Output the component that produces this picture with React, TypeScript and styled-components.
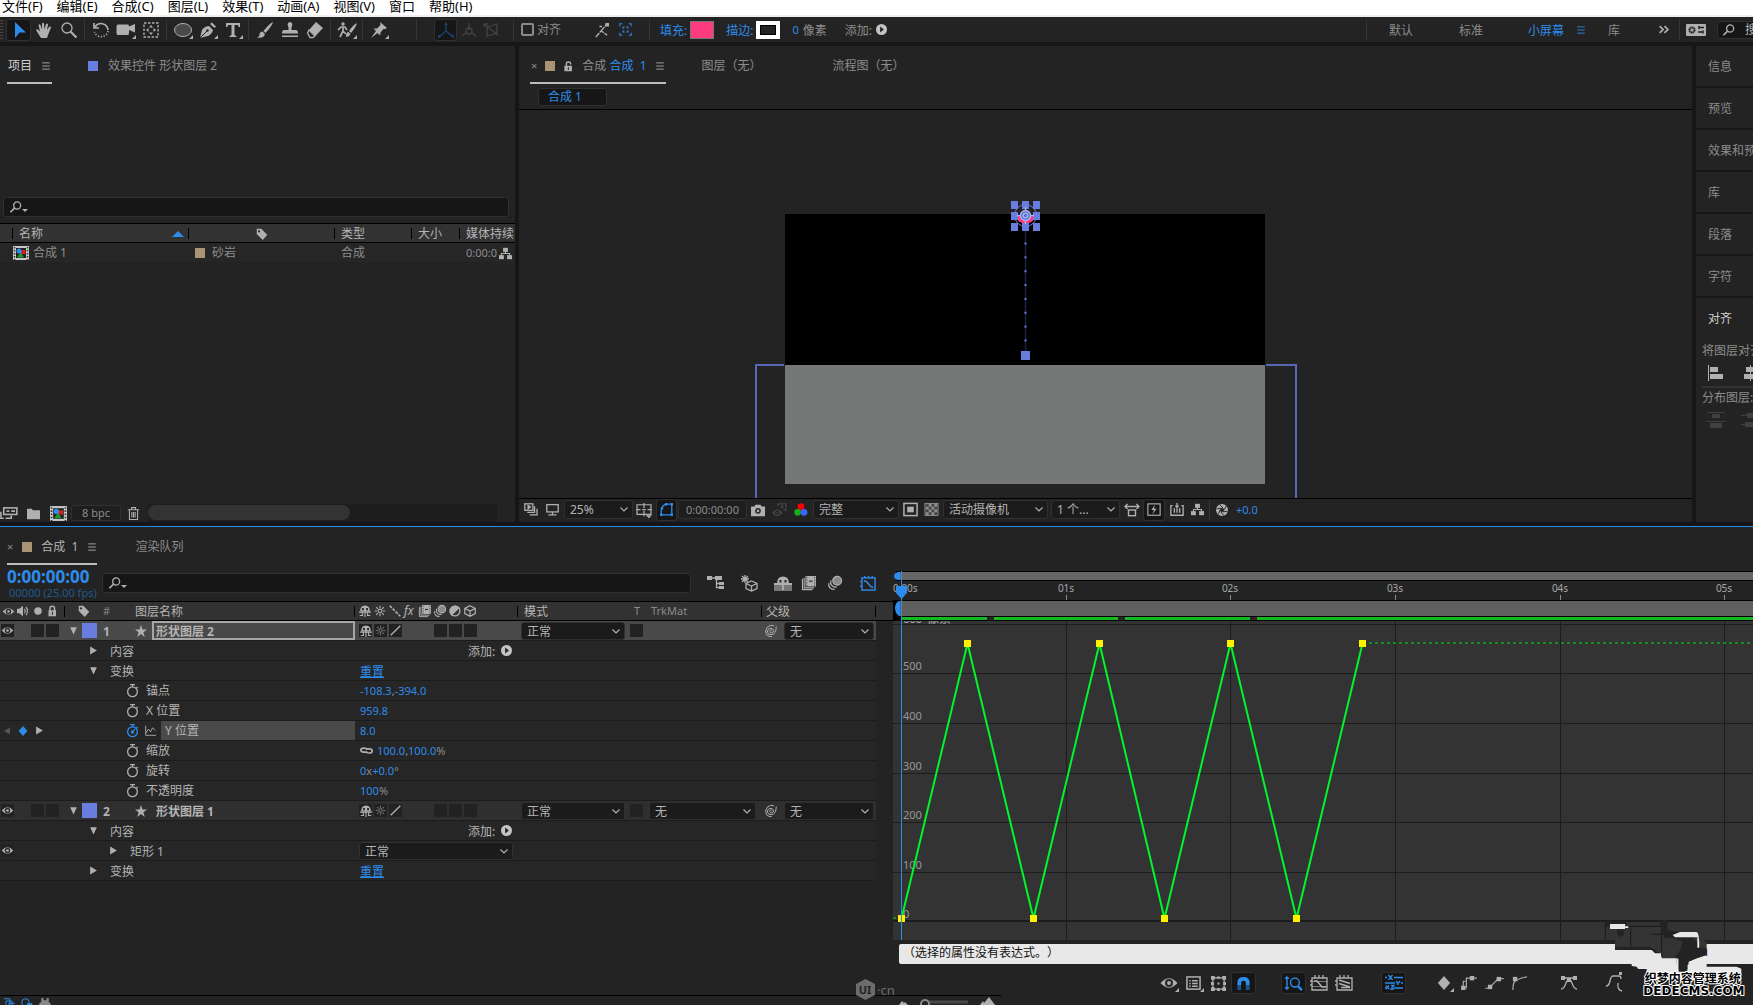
import React from "react";
import styled, { createGlobalStyle, css } from "styled-components";

const c = {
  bg: "#232323",
  gap: "#161616",
  head: "#323232",
  well: "#161616",
  line: "#303030",
  dim: "#8c8c8c",
  text: "#b4b4b4",
  bright: "#d0d0d0",
  icon: "#b0b0b0",
  blue: "#2d8ceb",
  layer: "#687ddd",
  sand: "#a89474",
};

const Global = createGlobalStyle`
  * { box-sizing: border-box; }
  body { margin: 0; background: ${c.gap}; overflow: hidden; text-spacing-trim: space-all; }
  body, button, input, select { font: 12px/16px "Noto Sans", "Noto Sans CJK SC", sans-serif; }
  svg { display: block; flex: none; }
`;

/* ---------- icons ---------- */

const S = { fill: "none", stroke: "currentColor", strokeWidth: 1.3 } as const;

const art: Record<string, React.ReactNode> = {
  arrow: <path d="M4 0L15 10.500 8.500 10.500 4 16Z" fill="currentColor" />,
  hand: <path d="M5 16L1.500 10.500 0 8Q1 6.500 2.500 8L4 9.500 2.500 3Q3.500 1.500 4.500 3L6 7.500 6 1.500Q7 0 8 1.500L8.500 7.500 10 2Q11.500 1 12 2.500L11 8 13.500 4.500Q15 4 15 5.500L12 13 11 16Z" fill="currentColor" />,
  zoom: <g {...S}><circle cx="6" cy="6" r="5" /><path d="M9.500 9.500L15.500 15.500" strokeWidth="2.200" /></g>,
  rotate: <g {...S} strokeWidth="1.700"><path d="M2 5A7 7 0 0 1 15 8" /><path d="M15 9A7 7 0 0 1 1.500 10" strokeDasharray="1.200 1.700" /><path d="M1 1V6H6" /></g>,
  camera: <path d="M0 2.500H10Q11 2.500 11 4.500L17 2V10.500L11 8V11Q11 13 10 13H0Q-1.500 13 -1.500 11V4.500Q-1.500 2.500 0 2.500Z" fill="currentColor" />,
  panBehind: <g {...S}><rect x="1" y="1" width="14" height="14" strokeDasharray="2.500 1.500" /><path d="M8 3L10 5.500H6ZM8 13L10 10.500H6ZM3 8L5.500 6V10ZM13 8L10.500 6V10Z" fill="currentColor" stroke="none" /></g>,
  ellipse: <ellipse cx="8" cy="8" rx="8.500" ry="6.500" fill="#4a4a4a" stroke="currentColor" />,
  pen: <g><path d="M0 16L2 8Q5 4 9 4L13 8Q12 12 8 14Z" fill="currentColor" /><path d="M10 2L12 .500 16 4.500 14.500 6Z" fill="currentColor" /><path d="M0 16L7 9" stroke={c.bg} /><circle cx="7.500" cy="8.500" r="1.200" fill={c.bg} /></g>,
  type: <path d="M1 1H15V5H13.500L13 3H9.500V13L11.500 14V15H4.500V14L6.500 13V3H3L2.500 5H1Z" fill="currentColor" />,
  brush: <path d="M16 0Q12 2 6.500 9L8.500 11Q15 4 16 0ZM5.500 9.500Q2.500 9.500 2.500 13 2 15 0 15.500 6.500 17 8 12Z" fill="currentColor" />,
  stamp: <path d="M8 0A2.600 2.600 0 0 1 10 4Q9 6 9.500 8H14Q16 8 16 11.500H0Q0 8 2 8H6.500Q7 6 6 4A2.600 2.600 0 0 1 8 0ZM0 13.500H16V15H0Z" fill="currentColor" />,
  eraser: <g><path d="M9 0L16 6 8.500 14 2 8Z" fill="currentColor" /><path d="M2 8L8 14 6 15.500H3L.500 11Z" {...S} /></g>,
  roto: <g><circle cx="4" cy="2" r="1.700" fill="currentColor" /><path d="M-1 8L2 5H6L8 8M4 5V9L1 15M4 9L7 12" {...S} strokeWidth="1.700" /><path d="M18 1Q14 3 10 9L12 11Q17 5 18 1ZM9.500 10Q7 10 7 15 10 15 11.500 12Z" fill="currentColor" /></g>,
  pin: <path d="M9 0L16 6 14 7 12.500 7 9.500 10.500 9 13.500 6.500 11 0 16 5 9 2.500 6.500 6 6.500 9.500 3Z" fill="currentColor" />,
  axis: <g {...S}><path d="M8 2V9M8 9L1 15M8 9L15 15" /><path d="M8 0L10 3H6ZM0 16V12L3 15ZM16 16V12L13 15Z" fill="currentColor" stroke="none" /></g>,
  axisWorld: <g {...S}><circle cx="8" cy="9" r="3" /><path d="M8 1V8M6 10L1 14M10 10L15 14" /></g>,
  axisView: <g {...S}><path d="M3 5L13 2V11L3 14ZM0 2L14 13M0 2V5M0 2H4" /></g>,
  snapArrow: <g {...S} strokeWidth="1.600"><path d="M1 16L7 9 14 14M7 9L13 2M5 4H8" strokeDasharray="6 1" /><rect x="12" y="0" width="4" height="4" fill="currentColor" stroke="none" /></g>,
  corners: <g {...S}><path d="M1 4V1H4M12 1H15V4M15 12V15H12M4 15H1V12" /><path d="M5 7V5H7M9 5H11V7M5 9V11H7M9 11H11V9" /></g>,
  play: <g><circle cx="8" cy="8" r="8" fill="#c4c4c4" /><path d="M6 3.500L11.500 8 6 12.500Z" fill={c.bg} /></g>,
  bars: <path d="M2 3H14M2 8H14M2 13H14" {...S} strokeWidth="1.400" />,
  chevrons: <path d="M1 3L6 8 1 13M8 3L13 8 8 13" {...S} strokeWidth="2.500" />,
  card: <g><rect x="-2" y="2" width="20" height="12" rx="1" fill="currentColor" /><path d="M11 5.500H16M10 10H15M11 4V7M15 8.500V11.500" stroke={c.bg} strokeWidth="1.500" /><circle cx="4" cy="8" r="2.500" fill="none" stroke={c.bg} strokeWidth="2.200" strokeDasharray="1.500 .400" /></g>,
  search: <g {...S} strokeWidth="1.700"><circle cx="9.500" cy="6" r="4.700" /><path d="M6 9.500L.500 15" strokeWidth="2.200" /></g>,
  tag: <path d="M1 1H7L15 9 9 16 1 8ZM4 3A1.500 1.500 0 1 0 4 6 1.500 1.500 0 1 0 4 3Z" fill="currentColor" fillRule="evenodd" />,
  comp: <g><rect x="0" y="1" width="16" height="14" fill="#c8c8c8" /><path d="M1.500 2V15M14.500 2V15" stroke="#333" strokeDasharray="1.500 1.500" strokeWidth="1.500" /><rect x="3" y="3" width="10" height="10" fill="#222" /><rect x="8" y="5" width="4.500" height="4" fill="#d21f1f" /><path d="M7.500 7L11 12.500H4Z" fill="#1d9c2a" /><circle cx="6" cy="6" r="2.500" fill="#2d8ceb" /></g>,
  tree: <g fill="currentColor"><rect x="5" y="1" width="6" height="5" /><rect x="0" y="10" width="6" height="5" /><rect x="10" y="10" width="6" height="5" /><path d="M3 10V8H13V10M8 5V8" {...S} /></g>,
  interpret: <g {...S} strokeWidth="1.700"><rect x="4" y="2" width="14" height="7" /><path d="M7 5.500H10M12 5.500H16M1 6V12M-2 7V13M-2 13H4M6 13H12V10" /></g>,
  folder: <path d="M0 2H6L7 4H16V15H0Z" fill="currentColor" />,
  trash: <g {...S}><path d="M1 3.500H15M5.500 3V.800H10.500V3M3 4V15.300H13V4M6 6V13M8 6V13M10 6V13" /></g>,
  lock: <path d="M2 7H3V4Q3 .500 7 .500 11 .500 11 4V7H12V15H2ZM5 7H9V4Q9 2.500 7 2.500 5 2.500 5 4ZM6.500 9V13H8V9Z" fill="currentColor" fillRule="evenodd" />,
  unlock: <path d="M3 7H6V4Q6 2.500 8 2.500 10 2.500 10 4V5H12V4Q12 .500 8 .500 4 .500 4 4V7H2V15H13V7ZM7 9H8.500V13H7Z" fill="currentColor" fillRule="evenodd" />,
  viewers: <g {...S} strokeWidth="1.600"><rect x="1" y="1" width="10" height="8" /><path d="M5 3L8 5 5 7Z" fill="currentColor" /><path d="M13 4V11.500H4M16 7V14.500H7" /></g>,
  monitor: <g {...S} strokeWidth="1.600"><rect x="1" y="2" width="14" height="9" /><path d="M8 11V14.500M3 14.500H13" /></g>,
  guides: <g><path d="M0 2H16V13H0ZM8 0V6M8 9V15M-1 7.500H4M12 7.500H17M6 7.500H10" {...S} strokeWidth="1.400" /><path d="M10 14H17L13.500 17.500Z" fill="currentColor" /></g>,
  mask: <g {...S} strokeWidth="1.600"><path d="M1.500 14.500V9Q3 2 8 1.500H14.500V14.500Z" /><path d="M0 13H3V16H0ZM13 13H16V16H13ZM13 0H16V3H13ZM6 0H9V3H6ZM1 5H4V8H1Z" fill="currentColor" stroke="none" /></g>,
  photo: <g><path d="M0 4H4L5 2H11L12 4H16V15H0Z" fill="currentColor" /><circle cx="8" cy="9" r="3.200" fill={c.bg} /><circle cx="8" cy="9" r="1.500" fill="currentColor" /></g>,
  showPhoto: <g><path d="M0 11Q6 3 12 11 6 19 0 11Z" fill="currentColor" /><circle cx="6" cy="11" r="2.500" fill={c.bg} /><circle cx="6" cy="11" r="1" fill="currentColor" /><path d="M7 3V1H16V8H13" {...S} strokeWidth="1.500" /><circle cx="11.500" cy="4.500" r="1.700" fill="currentColor" /></g>,
  rgb: <g><circle cx="8" cy="3.500" r="4.500" fill="#f00" /><circle cx="3.500" cy="11" r="4.500" fill="#16b016" /><circle cx="12" cy="11" r="4.500" fill="#3a66ff" /></g>,
  region: <g><rect x="1" y="1.500" width="14" height="13" {...S} strokeWidth="1.600" /><rect x="4.500" y="5" width="7" height="6" fill="currentColor" /></g>,
  checker: <g><rect x="1" y="1.500" width="14" height="13" fill="#444" stroke="currentColor" strokeWidth=".700" /><path d="M5 2H8V5H5ZM11 2H14V5H11ZM2 5H5V8H2ZM8 5H11V8H8ZM5 8H8V11H5ZM11 8H14V11H11ZM2 11H5V14H2ZM8 11H11V14H8Z" fill="#8f8f8f" /></g>,
  pixelAspect: <g {...S} strokeWidth="1.600"><path d="M0 4H16M3 1L0 4 3 7M13 1L16 4 13 7" /><rect x="4" y="8" width="8" height="6.500" /></g>,
  fast: <g {...S}><rect x="1" y="1" width="14" height="13" /><path d="M9 2L5 8H8L6 13 11 6.500H8Z" fill="currentColor" stroke="none" /></g>,
  timelineBtn: <g {...S} strokeWidth="1.500"><path d="M3 3H1V14H15V3H13M5 6V11M8 6V11M11 6V11M8 0V5M6 3L8 5 10 3" /></g>,
  aperture: <g><circle cx="8" cy="8" r="8" fill="currentColor" /><circle cx="8" cy="8" r="2.800" fill={c.bg} /><path d="M5 1L9.500 5.500M14 2.500L10.500 8M15.500 9.500L9 10.500M10.500 15.500L6.500 10.500M3 14L5.500 8M.500 6.500L7 5.500" stroke={c.bg} strokeWidth="1.200" /></g>,
  eye: <g><path d="M-.500 8Q8 -1.500 16.500 8 8 17.500 -.500 8Z" fill="currentColor" /><circle cx="8" cy="8" r="4" fill="#2a2a2a" /><circle cx="8" cy="8" r="1.900" fill="currentColor" /></g>,
  speaker: <g><path d="M0 5H3L8 1V15L3 11H0Z" fill="currentColor" /><path d="M10 5Q12 8 10 11M12 2.500Q16 8 12 13.500" {...S} strokeWidth="1.600" /></g>,
  dot: <circle cx="8" cy="8" r="5" fill="currentColor" />,
  star: <path d="M8 0L10 6H16L11.200 9.700 13 16 8 12 3 16 4.800 9.700 0 6H6Z" fill="currentColor" />,
  shy: <g><path d="M1.500 8.500Q1.500 .500 8 .500 14.500 .500 14.500 8.500Z" fill="currentColor" /><path d="M4 4H6.500V7H4ZM9.500 4H12V7H9.500Z" fill="#2a2a2a" /><path d="M0 9.500H16M8 8V16M1 14H5.500M10.500 14H15M4.500 9V14M11.500 9V14" {...S} strokeWidth="1.500" /></g>,
  shyFill: <g><path d="M-1 9H17V16H-1Z" fill="#777" /><path d="M2 8.500Q2 1.500 8 1.500 14 1.500 14 8.500Z" fill="currentColor" /><path d="M4.500 5H6.500V7.500H4.500ZM9.500 5H11.500V7.500H9.500Z" fill="#2a2a2a" /><path d="M-1 9H17M8 8V15" {...S} strokeWidth="1.800" /></g>,
  sun: <g {...S} strokeWidth="1.500"><circle cx="8" cy="8" r="2.500" /><path d="M8 1V4M8 12V15M1 8H4M12 8H15M3 3L5 5M11 11L13 13M13 3L11 5M3 13L5 11" /></g>,
  slash: <path d="M1 15L15 1" {...S} strokeWidth="2" />,
  dashSlash: <path d="M1 1L15 15" {...S} strokeWidth="2.200" strokeDasharray="4 1.500" />,
  film: <g><rect x="4" y="0" width="12" height="12" fill="currentColor" /><path d="M5.500 1V12M14.500 1V12" stroke={c.head} strokeDasharray="1.500 1.500" /><path d="M8 6H12" stroke={c.head} strokeWidth="1.500" /><path d="M.500 3V15.500H12M2.500 2V13.500H14" {...S} /></g>,
  blur: <g {...S} strokeWidth="1.400"><circle cx="10.500" cy="5.500" r="5" fill="#8a8a8a" /><path d="M3.500 5A5.500 5.500 0 0 0 10 12.500M1 8A5.500 5.500 0 0 0 7.500 15" /></g>,
  half: <g {...S} strokeWidth="1.800"><circle cx="8" cy="8" r="6.500" /><path d="M13 3.500A6.500 6.500 0 1 0 3.500 13Z" fill="currentColor" /></g>,
  cube: <path d="M8 1L15 4.500V11.500L8 15 1 11.500V4.500ZM1 4.500L8 8 15 4.500M8 8V15" {...S} strokeWidth="1.600" />,
  stopwatch: <g {...S} strokeWidth="1.600"><circle cx="8" cy="9.500" r="6" /><path d="M8 3.500V1M5 .800H11M13 3.500L14.500 5" /></g>,
  stopwatchOn: <g {...S} strokeWidth="1.600"><circle cx="8" cy="9.500" r="6" /><path d="M8 3.500V1M5 .800H11M13 3.500L14.500 5M7 10.500L11 6.500M7 8V11H10" /></g>,
  graphSmall: <path d="M1 1V15H16M1 12L5 6 8 10 11 4 15 8" {...S} />,
  link: <g {...S} strokeWidth="2"><path d="M9 10H5Q1 10 1 7.500T5 5Q8 5 9 7M7 6H11Q15 6 15 8.500T11 11Q8 11 7 9" /></g>,
  whip: <path d="M9.500 7A2 2 0 1 0 9 10.500Q11.500 10 11.500 7A4.300 4.300 0 1 0 8 13Q15 12.500 15 2M12 1Q7 -1 3 3 -1 8 2 13 5 16 9 15.500" {...S} />,
  flow: <g fill="currentColor"><rect x="-1" y="1" width="5" height="4" /><rect x="7" y="1" width="7" height="4" /><rect x="11" y="7" width="5" height="3" /><rect x="11" y="11" width="5" height="3" /><path d="M4 3H8M8.500 3V12.500H11M8.500 8.500H11" {...S} /></g>,
  draft: <g><path d="M4 0V8M0 4H8M1 1L7 7M7 1L1 7" {...S} /><path d="M10.500 6L16 8.500V13.500L10.500 16 5 13.500V8.500ZM5 8.500L10.500 11 16 8.500M10.500 11V16" {...S} /></g>,
  graph: <g {...S} strokeWidth="1.500"><rect x="1" y="2" width="14" height="13" /><path d="M4 2V0M8 2V0M12 2V0M1 6H-1M1 11H-1M3 5Q6 5 8 8.500T13 12" /></g>,
  fitSel: <g {...S}><path d="M1 15V3H16V15ZM4 0V3M8 0V3M12 0V3M-1 6H1M-1 10H1" /><path d="M1 6.500H16M1 11.500H16" strokeWidth=".600" /><path d="M3 6H6L11 12H15" strokeWidth="1.600" /></g>,
  fitAll: <g {...S}><path d="M1 15V3H16V15ZM4 0V3M8 0V3M12 0V3M-1 6H1M-1 10H1" /><path d="M3 5L14 8.500M3 8.500L14 12M5 12.500H14" strokeWidth="1.500" /></g>,
  list: <g {...S} strokeWidth="1.600"><rect x="1" y="1" width="14" height="13" /><path d="M3.500 5H5M6.500 5H12.500M3.500 8H5M6.500 8H12.500M3.500 11H5M6.500 11H12.500" /></g>,
  transform: <g {...S}><path d="M2 2H14V14H2Z" /><path d="M0 0H4V4H0ZM12 0H16V4H12ZM0 12H4V16H0ZM12 12H16V16H12ZM6.500 .500H9.500V3H6.500ZM6.500 13H9.500V16H6.500ZM0 6.500H3V9.500H0ZM13 6.500H16V9.500H13ZM7 7H9V9H7Z" fill="currentColor" stroke="none" /></g>,
  magnet: <g fill="none" strokeWidth="4"><path d="M3.500 10V7Q3.500 3 8 3 12.500 3 12.500 7V10" stroke="currentColor" /><path d="M3.500 10V15M12.500 10V15" stroke="#1c548c" /></g>,
  autoZoom: <g {...S} strokeWidth="1.500"><circle cx="9.500" cy="7" r="4.700" /><path d="M13 11L17 15" strokeWidth="2.500" /><path d="M1 1V14M-1 3L1 1 3 3M-1 12L1 14 3 12" /></g>,
  separate: <g {...S}><path d="M-1 2.500H1M8 2.500H17M2.500 0L6.500 5M6.500 0L2.500 5M-1 8H9M10 6L12 8.500 14 6M12 8.500V10M15 8H17M-1 13H0M8 13H17M0 10.500L3 14M3 10.500L0 14M5 10.500H8L5 14H8" /></g>,
  diamond: <path d="M8 0L15 8 8 16 1 8Z" fill="currentColor" />,
  hold: <g fill="currentColor"><rect x="-1" y="11" width="5" height="5" /><rect x="9" y="0" width="5" height="5" /><path d="M1.500 11V6H4M9 2.500H5V13.500H4M14 2.500H17" {...S} /></g>,
  linear: <g fill="currentColor"><rect x="1" y="10" width="5" height="5" /><rect x="11" y="1" width="5" height="5" /><path d="M-2 14H2M5 11L12 4M13 3H19" {...S} /></g>,
  auto: <g fill="currentColor"><rect x="1" y="1" width="5" height="5" /><path d="M1 16Q1 6 5 5 10 2 17 1" {...S} /></g>,
  ease: <g fill="currentColor"><path d="M0 14Q3 14 5 8 6 5 8 5 10 5 11 8 13 14 16 14M1 3H15" {...S} /><rect x="0" y="1" width="4" height="4" /><rect x="6" y="3" width="4" height="4" /><rect x="12" y="1" width="4" height="4" /></g>,
  easeIn: <g><path d="M-1 11Q2 11 3 6 4 1 6 1H12Q14 1 14 4M11 8Q10 15 15 16" {...S} /><rect x="12" y="-3" width="3" height="3" fill="currentColor" /></g>,
  tri: <path d="M2 1L14 8 2 15Z" fill="currentColor" />,
  triDown: <path d="M2 2H14L8 15Z" fill="currentColor" />,
  triLeft: <path d="M14 1L2 8 14 15Z" fill="currentColor" />,
  alignLeft: <g fill="currentColor"><rect x="0" y="0" width="1" height="16" /><rect x="2" y="2" width="8" height="5" /><rect x="2" y="9" width="13" height="5" /></g>,
  alignMid: <g fill="currentColor"><rect x="7" y="0" width="1" height="16" /><rect x="3" y="2" width="10" height="5" /><rect x="1" y="9" width="14" height="5" /></g>,
  distTop: <g fill="currentColor"><rect x="-1" y="0" width="18" height="1" /><rect x="4" y="2" width="8" height="4" /><rect x="-1" y="9" width="18" height="1" /><rect x="2" y="11" width="12" height="5" /></g>,
  distMid: <g fill="currentColor"><rect x="-2" y="3" width="18" height="1" /><rect x="4" y="1" width="10" height="5" /><rect x="-2" y="12" width="18" height="1" /><rect x="2" y="10" width="12" height="5" /></g>,
  copies: <g {...S}><path d="M1 1H9V12M4 12V4H12V16M8 16V7H16" /></g>,
  shapes: <g><circle cx="6" cy="6" r="5" {...S} /><rect x="8" y="7" width="7" height="9" fill="currentColor" /></g>,
  brace: <path d="M3 0H6V3H10V0H13V5L16 8V12H0V8L3 5Z" fill="#888" />,
};

const Icon = ({ n, s = 16, color }: { n: string; s?: number; color?: string }) => (
  <svg width={s} height={s} viewBox="0 0 16 16" color={color ?? c.icon} overflow="visible" aria-hidden="true">
    {art[n]}
  </svg>
);

/* ---------- shell ---------- */

const Shell = styled.div`
  position: relative;
  display: flex;
  flex-direction: column;
  height: 100vh;
  overflow: hidden;
  background: ${c.gap};
  color: ${c.text};
  white-space: nowrap;
  cursor: default;
`;

const MenuBar = styled.nav`
  display: flex;
  gap: 14px;
  flex: none;
  height: 17px;
  padding-left: 2px;
  background: #fff;
  border-bottom: 2px solid #f0f0f0;
`;

const MenuItem = styled.button`
  border: 0;
  padding: 0;
  height: 13px;
  background: none;
  color: #000;
  font-size: 13px;
  line-height: 13px;
`;

const Toolbar = styled.div`
  display: flex;
  align-items: center;
  flex: none;
  height: 25px;
  margin-bottom: 4px;
  background: ${c.bg};
  overflow: hidden;
`;

const Grip = styled.div`
  width: 3px;
  height: 20px;
  margin-right: 3px;
  background: repeating-linear-gradient(#444 0 1px, transparent 1px 3px);
`;

const Tool = styled.button<{ $on?: boolean; $w?: number; $more?: boolean }>`
  position: relative;
  display: flex;
  flex: none;
  align-items: center;
  justify-content: center;
  width: ${(p) => p.$w ?? 25}px;
  height: 22px;
  padding: 0;
  border: 1px solid ${(p) => (p.$on ? "#303030" : "transparent")};
  border-radius: 3px;
  background: ${(p) => (p.$on ? c.well : "none")};
  ${(p) =>
    p.$more &&
    css`
      &::after {
        content: "";
        position: absolute;
        right: 1px;
        bottom: 1px;
        border: 2px solid ${c.icon};
        border-left-color: transparent;
        border-top-color: transparent;
      }
    `}
`;

const Sep = styled.span`
  flex: none;
  width: 1px;
  height: 20px;
  margin: 0 3px;
  background: #373737;
`;

const Space = styled.span<{ $w: number }>`
  flex: none;
  width: ${(p) => p.$w}px;
`;

const Grow = styled.span`
  flex: 1;
`;

const Check = styled.label`
  display: flex;
  align-items: center;
  gap: 3px;
  width: 72px;
  color: ${c.dim};
  input {
    appearance: none;
    width: 13px;
    height: 13px;
    margin: 0;
    border: 2px solid #8a8a8a;
    border-radius: 2px;
  }
`;

const Txt = styled.span<{ $c?: string; $s?: number; $b?: boolean }>`
  flex: none;
  padding-top: ${(p) => (p.$s ? 0 : 2)}px;
  color: ${(p) => p.$c ?? c.text};
  font-size: ${(p) => p.$s ?? 12}px;
  font-weight: ${(p) => (p.$b ? 700 : 400)};
`;

const Swatch = styled.button<{ $stroke?: boolean }>`
  width: 24px;
  height: 18px;
  margin: 0 12px 0 3px;
  padding: 0;
  border: ${(p) => (p.$stroke ? "4px solid #fff" : "1px solid #777")};
  background: ${(p) => (p.$stroke ? "#222" : "#ff3b7f")};
  ${(p) => p.$stroke && "box-shadow: inset 0 0 0 1px #000;"}
`;

const Workspace = styled.button<{ $on?: boolean; $w: number }>`
  flex: none;
  width: ${(p) => p.$w}px;
  padding: 2px 0 0;
  border: 0;
  background: none;
  color: ${(p) => (p.$on ? c.blue : c.dim)};
  text-align: left;
`;

const HelpSearch = styled.label`
  display: flex;
  flex: none;
  align-items: center;
  gap: 10px;
  width: 90px;
  height: 18px;
  margin: 0 -54px 0 13px;
  padding-left: 5px;
  border: 1px solid #303030;
  border-radius: 3px;
  background: ${c.well};
  input {
    width: 54px;
    padding: 0;
    border: 0;
    background: none;
    &::placeholder { color: ${c.text}; }
  }
`;

const Upper = styled.div`
  display: flex;
  flex: none;
  gap: 4px;
  height: 476px;
`;

const ProjectPanel = styled.section`
  display: flex;
  flex: none;
  flex-direction: column;
  width: 515px;
  background: ${c.bg};
`;

const TabBar = styled.div<{ $h: number; $pad: number }>`
  display: flex;
  flex: none;
  height: ${(p) => p.$h}px;
  padding-left: ${(p) => p.$pad}px;
`;

const Tab = styled.button<{ $on?: boolean; $c?: string; $gap?: number; $ml?: number; $px?: number }>`
  display: flex;
  align-items: center;
  gap: ${(p) => p.$gap ?? 10}px;
  height: 38px;
  margin: 0 0 0 ${(p) => p.$ml ?? 0}px;
  padding: 4px ${(p) => p.$px ?? 2}px 0;
  border: 0;
  border-bottom: 2px solid ${(p) => (p.$on ? "#bdbdbd" : "transparent")};
  background: none;
  color: ${(p) => p.$c ?? c.dim};
`;

const Chip = styled.i<{ $c: string; $s?: number }>`
  flex: none;
  width: ${(p) => p.$s ?? 10}px;
  height: ${(p) => p.$s ?? 10}px;
  background: ${(p) => p.$c};
`;

const SearchBox = styled.label`
  display: flex;
  align-items: center;
  flex: 1;
  height: 20px;
  padding-left: 6px;
  border: 1px solid #2f2f2f;
  border-radius: 3px;
  background: ${c.well};
  input {
    flex: 1;
    min-width: 0;
    border: 0;
    background: none;
    color: ${c.text};
    outline: 0;
  }
`;

const SmallTri = styled.i`
  border: 3px solid transparent;
  border-top-color: ${c.icon};
  border-bottom: 0;
  margin-top: 7px;
`;

const ProjectSearch = styled.div`
  display: flex;
  padding: 111px 6px 6px 3px;
`;

const ProjectTable = styled.table`
  width: 100%;
  table-layout: fixed;
  border-collapse: collapse;
  th, td {
    height: 19px;
    padding: 2px 0 0 7px;
    font-weight: 400;
    text-align: left;
    line-height: 16px;
    overflow: hidden;
  }
  th {
    background: linear-gradient(#000, #000) 0 4px / 1px 11px no-repeat ${c.head};
    border: solid #000;
    border-width: 1px 0;
    color: ${c.text};
  }
  th:first-child { background: linear-gradient(#000, #000) 12px 4px / 1px 11px no-repeat ${c.head}; padding-left: 19px; }
  td:first-child { padding-left: 13px; }
  td { background: #262626; color: ${c.dim}; }
`;

const Inline = styled.span<{ $gap?: number; $between?: boolean; $center?: boolean }>`
  display: flex;
  align-items: center;
  height: 16px;
  gap: ${(p) => p.$gap ?? 4}px;
  ${(p) => p.$between && "justify-content: space-between; padding-right: 4px;"}
  ${(p) => p.$center && "justify-content: center; padding-right: 6px;"}
`;

const Footer = styled.div<{ $line?: boolean }>`
  display: flex;
  flex: none;
  align-items: center;
  height: ${(p) => (p.$line ? 24 : 18)}px;
  margin-top: auto;
  ${(p) => p.$line && "border-top: 1px solid #000; padding: 0 0 2px 5px;"}
  overflow: hidden;
`;

const Depth = styled.button`
  width: 50px;
  height: 16px;
  margin: 0 6px 0 4px;
  padding: 0;
  border: 1px solid #303030;
  border-radius: 3px;
  background: #1e1e1e;
  color: ${c.dim};
  font-size: 11px;
  line-height: 14px;
`;

const ScrollTrack = styled.div`
  flex: 1;
  height: 18px;
  margin: 0 18px 0 8px;
  background: #1d1d1d;
  &::before {
    content: "";
    display: block;
    width: 58%;
    height: 15px;
    margin-top: 1px;
    border-radius: 8px;
    background: #333;
  }
`;

/* ---------- viewer ---------- */

const Viewer = styled.section`
  display: flex;
  flex: 1;
  min-width: 0;
  flex-direction: column;
  background: ${c.bg};
`;

const CompPath = styled.div`
  flex: none;
  height: 22px;
  padding-left: 19px;
  border-bottom: 1px solid #000;
  button {
    width: 69px;
    height: 18px;
    padding: 0 0 0 9px;
    border: 1px solid #303030;
    border-radius: 3px;
    background: ${c.well};
    color: ${c.blue};
    text-align: left;
    line-height: 16px;
  }
`;

const Canvas = styled.svg`
  flex: 1;
  width: 100%;
  min-height: 0;
`;

const Pick = styled.span<{ $w: number; $h?: number; $ml?: number }>`
  position: relative;
  flex: none;
  width: ${(p) => p.$w}px;
  height: ${(p) => p.$h ?? 19}px;
  margin-left: ${(p) => p.$ml ?? 0}px;
  select {
    appearance: none;
    display: block;
    width: 100%;
    height: 100%;
    padding: 1px 16px 0 5px;
    border: 1px solid #303030;
    border-radius: 3px;
    background: #1b1b1b;
    color: ${c.text};
    line-height: 16px;
  }
  svg {
    position: absolute;
    right: 5px;
    top: 7px;
    pointer-events: none;
  }
`;

const Select = ({ v, w, h, ml, label }: { v: string; w: number; h?: number; ml?: number; label: string }) => (
  <Pick $w={w} $h={h} $ml={ml}>
    <select aria-label={label} defaultValue={v}>
      <option>{v}</option>
    </select>
    <svg width="8" height="5" viewBox="0 0 8 5" aria-hidden="true">
      <path d="M.500 .500L4 4 7.500 .500" fill="none" stroke={c.icon} strokeWidth="1.200" />
    </svg>
  </Pick>
);

const TimeBox = styled.button`
  width: 69px;
  height: 19px;
  margin: 0 4px 0 1px;
  padding: 0;
  border: 1px solid #303030;
  border-radius: 3px;
  background: #1e1e1e;
  color: ${c.dim};
  font-size: 11px;
`;

/* ---------- side dock ---------- */

const Dock = styled.aside`
  display: flex;
  flex: none;
  flex-direction: column;
  width: 57px;
  overflow: hidden;
`;

const DockTab = styled.button<{ $on?: boolean }>`
  flex: none;
  height: 40px;
  margin-bottom: 2px;
  padding: 2px 0 0 12px;
  border: 0;
  background: ${c.bg};
  color: ${(p) => (p.$on ? c.bright : c.dim)};
  text-align: left;
  ${(p) => p.$on && "margin-bottom: 0;"}
`;

const AlignBody = styled.div`
  flex: 1;
  padding: 5px 0 0 6px;
  background: ${c.bg};
  color: ${c.dim};
`;

const AlignRow = styled.div<{ $rule?: boolean }>`
  display: flex;
  gap: 19px;
  padding: 6px 0 5px 6px;
  ${(p) => p.$rule && "margin-bottom: 2px; border-bottom: 2px solid #333;"}
`;

/* ---------- timeline ---------- */

const Timeline = styled.section`
  display: flex;
  flex: 1;
  min-height: 0;
  flex-direction: column;
  margin-top: 4px;
  border-top: 1px solid ${c.blue};
  background: ${c.bg};
`;

const Split = styled.div`
  display: flex;
  flex: 1;
  min-height: 0;
`;

const Layers = styled.div`
  display: flex;
  flex: none;
  flex-direction: column;
  width: 893px;
`;

const TimeHead = styled.div`
  display: flex;
  flex: none;
  height: 34px;
  padding-left: 7px;
`;

const TimeCode = styled.div`
  width: 95px;
  color: ${c.blue};
  font-size: 17px;
  font-weight: 700;
  line-height: 19px;
  small {
    display: block;
    padding-left: 2px;
    color: #21588f;
    font-size: 11px;
    font-weight: 400;
    line-height: 13px;
  }
`;

const HeadSearch = styled.div`
  display: flex;
  width: 589px;
  padding-top: 6px;
`;

const HeadTools = styled.div`
  display: flex;
  align-items: center;
  flex: 1;
  padding: 0 0 2px 17px;
`;

const columns = "65px 290px 163px 109px 20px 115px 114px";

const ColumnHead = styled.div`
  display: grid;
  grid-template-columns: ${columns};
  flex: none;
  height: 20px;
  background: ${c.head};
  border: solid #000;
  border-width: 1px 0;
`;

const Cell = styled.div<{ $pl?: number; $sep?: boolean; $gap?: number }>`
  display: flex;
  align-items: center;
  min-width: 0;
  gap: ${(p) => p.$gap ?? 0}px;
  padding-left: ${(p) => p.$pl ?? 0}px;
  ${(p) => p.$sep && "background: linear-gradient(#000, #000) 100% 4px / 1px 11px no-repeat;"}
`;

const Row = styled.div<{ $kind?: "selected" | "layer" }>`
  display: grid;
  grid-template-columns: ${columns};
  flex: none;
  width: 876px;
  height: 20px;
  border-bottom: 1px solid #1c1c1c;
  background: ${(p) => (p.$kind === "selected" ? "#494949" : p.$kind === "layer" ? "#2f2f2f" : "#262626")};
`;

const Slot = styled.span`
  display: flex;
  flex: none;
  align-items: center;
  justify-content: center;
  width: 13px;
  height: 13px;
  background: #222;
`;

const Fx = styled.em`
  width: 12px;
  color: ${c.text};
  line-height: 16px;
`;

const NameBox = styled.span<{ $edit?: boolean }>`
  flex: 1;
  height: 19px;
  margin-left: 5px;
  padding-left: 2px;
  border: 2px solid ${(p) => (p.$edit ? "#a6a6a6" : "transparent")};
  color: ${c.text};
  font-weight: 700;
  line-height: 18px;
`;

const PropName = styled.span<{ $on?: boolean }>`
  flex: ${(p) => (p.$on ? "1" : "none")};
  height: 19px;
  margin-left: ${(p) => (p.$on ? 5 : 7)}px;
  padding-left: ${(p) => (p.$on ? 4 : 0)}px;
  background: ${(p) => (p.$on ? "#4a4a4a" : "none")};
  color: ${c.text};
  line-height: 20px;
`;

const Value = styled.span`
  color: ${c.blue};
  font-size: 11px;
  i { color: ${c.dim}; font-style: normal; }
`;

const Reset = styled.a`
  padding-top: 2px;
  color: ${c.blue};
`;

const BottomIcons = styled.div`
  display: flex;
  flex: none;
  gap: 6px;
  height: 10px;
  margin-top: auto;
  padding: 2px 0 0 3px;
  border-top: 1px solid #000;
  overflow: hidden;
`;

const GraphSide = styled.div`
  display: flex;
  flex: 1;
  min-width: 0;
  flex-direction: column;
  padding-top: 4px;
`;

const Chart = styled.svg`
  width: 100%;
  height: 369px;
`;

const Expression = styled.input`
  flex: none;
  height: 20px;
  margin: 4px 0 0 6px;
  padding: 0 0 4px 4px;
  border: 0;
  border-radius: 2px 0 0 2px;
  background: #e8e8e8;
  color: #111;
`;

const GraphTools = styled.div`
  display: flex;
  align-items: center;
  flex: none;
  height: 31px;
  padding: 7px 0 0 263px;
  overflow: hidden;
`;

const ZoomRow = styled.div`
  flex: none;
  width: 108px;
  height: 10px;
  border-top: 1px solid #000;
`;

const Watermark = styled.svg`
  position: absolute;
  right: 0;
  bottom: 0;
  pointer-events: none;
`;

const SiteMark = styled.div`
  position: absolute;
  left: 856px;
  bottom: 5px;
  display: flex;
  align-items: center;
  gap: 2px;
  color: #6c6c6c;
  font-size: 13px;
  pointer-events: none;
`;

/* ---------- parts ---------- */

const menus = ["文件(F)", "编辑(E)", "合成(C)", "图层(L)", "效果(T)", "动画(A)", "视图(V)", "窗口", "帮助(H)"];

const toolGroups: [string, boolean?][][] = [
  [["arrow"], ["hand"], ["zoom"]],
  [["rotate"], ["camera", true], ["panBehind"]],
  [["ellipse", true], ["pen", true], ["type", true]],
  [["brush"], ["stamp"], ["eraser"]],
  [["roto", true]],
  [["pin", true]],
];

const TopTools = () => (
  <Toolbar>
    <Grip />
    {toolGroups.map((g, i) => (
      <React.Fragment key={i}>
        {i > 0 && <Sep />}
        {g.map(([n, more]) => (
          <Tool key={n} aria-label={n} $on={n === "arrow"} $more={more}>
            <Icon n={n} color={n === "arrow" ? c.blue : undefined} />
          </Tool>
        ))}
      </React.Fragment>
    ))}
    <Space $w={22} />
    <Sep />
    <Space $w={14} />
    <Tool $w={23} $on aria-label="axis"><Icon n="axis" color="#1d456e" /></Tool>
    <Tool $w={23} aria-label="world axis"><Icon n="axisWorld" color="#444" /></Tool>
    <Tool $w={23} aria-label="view axis"><Icon n="axisView" color="#444" /></Tool>
    <Space $w={7} />
    <Sep />
    <Space $w={4} />
    <Check><input type="checkbox" />对齐</Check>
    <Tool $w={18} aria-label="snap edges"><Icon n="snapArrow" s={14} /></Tool>
    <Space $w={2} />
    <Tool $w={25} aria-label="snap features"><Icon n="corners" s={13} color={c.blue} /></Tool>
    <Space $w={8} />
    <Sep />
    <Space $w={7} />
    <Txt $c={c.blue}>填充:</Txt>
    <Swatch aria-label="填充" />
    <Txt $c={c.blue}>描边:</Txt>
    <Swatch $stroke aria-label="描边" />
    <Txt $c={c.blue} $s={11}>0</Txt>
    <Space $w={4} />
    <Txt $c={c.dim}>像素</Txt>
    <Space $w={18} />
    <Txt $c={c.dim}>添加:</Txt>
    <Space $w={4} />
    <Icon n="play" s={11} />
    <Grow />
    <Sep />
    <Space $w={19} />
    <Workspace $w={70}>默认</Workspace>
    <Workspace $w={69}>标准</Workspace>
    <Workspace $w={48} $on>小屏幕</Workspace>
    <Icon n="bars" s={10} color={c.blue} />
    <Space $w={22} />
    <Workspace $w={51}>库</Workspace>
    <Icon n="chevrons" s={11} />
    <Space $w={6} />
    <Sep />
    <Space $w={5} />
    <Icon n="card" />
    <HelpSearch><Icon n="search" s={12} /><input aria-label="搜索帮助" placeholder="搜索帮助" /></HelpSearch>
  </Toolbar>
);

const Project = () => (
  <ProjectPanel>
    <TabBar $h={40} $pad={7}>
      <Tab $on $c={c.bright} $gap={9} $px={1}>项目<Icon n="bars" s={10} /></Tab>
      <Tab $ml={34}><Chip $c={c.layer} />效果控件 形状图层 2</Tab>
    </TabBar>
    <ProjectSearch>
      <SearchBox><Icon n="search" s={12} /><SmallTri /><input aria-label="搜索项目" /></SearchBox>
    </ProjectSearch>
    <ProjectTable>
      <colgroup>
        <col style={{ width: 188 }} /><col style={{ width: 146 }} /><col style={{ width: 77 }} />
        <col style={{ width: 48 }} /><col />
      </colgroup>
      <thead>
        <tr>
          <th><Inline $between>名称<svg width="12" height="6"><path d="M0 6L6 0 12 6Z" fill={c.blue} /></svg></Inline></th>
          <th><Inline $center><Icon n="tag" s={12} /></Inline></th>
          <th>类型</th>
          <th>大小</th>
          <th>媒体持续</th>
        </tr>
      </thead>
      <tbody>
        <tr>
          <td><Inline><Icon n="comp" />合成 1</Inline></td>
          <td><Inline $gap={7}><Chip $c={c.sand} />砂岩</Inline></td>
          <td>合成</td>
          <td />
          <td><Inline $gap={2}><Txt $s={11} $c={c.dim}>0:00:0</Txt><Icon n="tree" s={13} /></Inline></td>
        </tr>
      </tbody>
    </ProjectTable>
    <Footer>
      <Icon n="interpret" s={15} />
      <Space $w={12} />
      <Icon n="folder" s={13} />
      <Space $w={10} />
      <Icon n="comp" s={17} />
      <Depth>8 bpc</Depth>
      <Icon n="trash" s={13} />
      <ScrollTrack />
    </Footer>
  </ProjectPanel>
);

const handles = [492, 503, 514];
const CompCanvas = () => (
  <Canvas role="img" aria-label="合成 1">
    <rect x="266" y="104" width="480" height="151" fill="#000" />
    <rect x="266" y="255" width="480" height="119" fill="#767877" />
    <path d="M265 255H237V400M747 255H777V400" fill="none" stroke="#5866b6" strokeWidth="2" />
    <path d="M506.500 120V241" stroke="#1c2146" strokeWidth="1.500" />
    {[0, 1, 2, 3, 4, 5, 6, 7].map((i) => (
      <rect key={i} x="505.500" y={132.500 + i * 13.850} width="2" height="2" fill={c.layer} />
    ))}
    <rect x="502" y="241" width="9" height="9" fill={c.layer} />
    <path d="M496 106A11 11 0 0 0 517 106Z" fill="#ff3b7f" />
    <circle cx="506.500" cy="105.500" r="11" fill="none" stroke={c.layer} />
    {handles.map((x) => [91, 102, 113].map((y) => <rect key={`${x}-${y}`} x={x} y={y} width="7" height="8" fill={c.layer} />))}
    <g fill="none" stroke="#a9b6f2" strokeWidth="1.300">
      <circle cx="506.500" cy="105.500" r="5" fill="#5b70cf" />
      <circle cx="506.500" cy="105.500" r="2.300" />
      <path d="M506.500 97V101M506.500 110V114M498 105.500H502M511 105.500H515" />
    </g>
  </Canvas>
);

const CompViewer = () => (
  <Viewer>
    <TabBar $h={42} $pad={11}>
      <Tab $on $gap={8} $px={1}>
        <Txt $s={11} $c={c.dim}>×</Txt><Chip $c={c.sand} /><Icon n="unlock" s={11} />
        <span>合成 <Txt $c={c.blue}>合成&nbsp; 1</Txt></span><Icon n="bars" s={10} />
      </Tab>
      <Tab $ml={34}>图层（无）</Tab>
      <Tab $ml={67}>流程图（无）</Tab>
    </TabBar>
    <CompPath><button>合成 1</button></CompPath>
    <CompCanvas />
    <Footer $line>
      <Icon n="viewers" s={13} /><Space $w={9} />
      <Icon n="monitor" s={13} />
      <Select label="放大率" v="25%" w={69} ml={5} />
      <Space $w={4} /><Icon n="guides" s={14} /><Space $w={5} />
      <Tool $w={21} $on aria-label="mask"><Icon n="mask" s={13} color={c.blue} /></Tool>
      <TimeBox>0:00:00:00</TimeBox>
      <Icon n="photo" s={14} /><Space $w={7} />
      <Icon n="showPhoto" s={14} color="#444" /><Space $w={9} />
      <Icon n="rgb" s={12} /><Space $w={6} />
      <Select label="分辨率" v="完整" w={86} />
      <Space $w={4} /><Icon n="region" s={15} /><Space $w={6} />
      <Icon n="checker" s={15} /><Space $w={4} />
      <Select label="3D 视图" v="活动摄像机" w={105} />
      <Space $w={3} />
      <Select label="视图布局" v="1 个..." w={69} />
      <Space $w={5} /><Icon n="pixelAspect" s={14} /><Space $w={4} />
      <Tool $w={22} $on aria-label="fast preview"><Icon n="fast" s={14} /></Tool>
      <Space $w={5} /><Icon n="timelineBtn" s={14} /><Space $w={7} />
      <Icon n="tree" s={13} /><Space $w={2} /><Sep /><Space $w={3} />
      <Icon n="aperture" s={12} /><Space $w={8} />
      <Txt $s={11} $c={c.blue}>+0.0</Txt>
    </Footer>
  </Viewer>
);

const SideDock = () => (
  <Dock>
    {["信息", "预览", "效果和预设", "库", "段落", "字符"].map((t) => <DockTab key={t}>{t}</DockTab>)}
    <DockTab $on>对齐</DockTab>
    <AlignBody>
      将图层对齐到:
      <AlignRow $rule><Icon n="alignLeft" /><Icon n="alignMid" /></AlignRow>
      分布图层:
      <AlignRow><Icon n="distTop" color="#404040" /><Icon n="distMid" color="#404040" /></AlignRow>
    </AlignBody>
  </Dock>
);

const Switches = () => (
  <Cell $pl={4} $gap={2}>
    <Slot><Icon n="shy" s={12} /></Slot>
    <Slot><Icon n="sun" s={11} color="#777" /></Slot>
    <Slot><Icon n="slash" s={11} /></Slot>
    <Space $w={28} />
    <Slot /><Slot /><Slot />
  </Cell>
);

const LayerRow = ({ num, name, on, matte }: { num: number; name: string; on?: boolean; matte?: boolean }) => (
  <Row $kind={on ? "selected" : "layer"}>
    <Cell $pl={1} $gap={2}>
      <Slot><Icon n="eye" s={11} /></Slot><Space $w={13} /><Slot /><Slot />
    </Cell>
    <Cell $pl={4}>
      <Icon n="triDown" s={9} /><Space $w={4} /><Chip $c={c.layer} $s={15} /><Space $w={6} />
      <Txt $b>{num}</Txt><Space $w={25} /><Icon n="star" s={12} />
      <NameBox $edit={on}>{name}</NameBox>
    </Cell>
    <Switches />
    <Cell $pl={3}><Select label="模式" v="正常" w={104} h={18} /></Cell>
    <Cell $pl={3}><Slot /></Cell>
    <Cell $pl={2}>{matte && <Select label="TrkMat" v="无" w={107} h={18} />}</Cell>
    <Cell $pl={3} $gap={7}><Icon n="whip" s={12} /><Select label="父级" v="无" w={90} h={18} /></Cell>
  </Row>
);

const GroupRow = ({ name, open, children, pad = 24, eye }: { name: string; open?: boolean; pad?: number; eye?: boolean; children: React.ReactNode }) => (
  <Row>
    <Cell $pl={1}>{eye && <Slot><Icon n="eye" s={11} /></Slot>}</Cell>
    <Cell $pl={pad}>
      <Icon n={open ? "triDown" : "tri"} s={9} /><Space $w={12} /><Txt>{name}</Txt>
    </Cell>
    {children}
  </Row>
);

const AddCell = () => (
  <Cell $pl={113} $gap={6}><Txt>添加:</Txt><Icon n="play" s={11} /></Cell>
);
const ResetCell = () => (
  <Cell $pl={5}><Reset href="#reset">重置</Reset></Cell>
);

const PropRow = ({ name, children, keyed }: { name: string; keyed?: boolean; children: React.ReactNode }) => (
  <Row>
    <Cell $pl={3} $gap={7}>
      {keyed && (<><Icon n="triLeft" s={8} color="#555" /><Icon n="diamond" s={10} color={c.blue} /><Icon n="tri" s={9} /></>)}
    </Cell>
    <Cell $pl={61}>
      <Icon n={keyed ? "stopwatchOn" : "stopwatch"} s={13} color={keyed ? c.blue : undefined} />
      {keyed && (<><Space $w={6} /><Icon n="graphSmall" s={11} /></>)}
      <PropName $on={keyed}>{name}</PropName>
    </Cell>
    <Cell $pl={5} $gap={4}>{children}</Cell>
  </Row>
);

const seconds = ["0:00s", "01s", "02s", "03s", "04s", "05s"];
const secondX = [8, 173, 337, 502, 667, 831];
const levels: [number, string][] = [[102, "500"], [152, "400"], [202, "300"], [251, "200"], [301, "100"]];
const keys: [number, number][] = [[8, 347], [74, 72], [140, 347], [206, 72], [271, 347], [337, 72], [403, 347], [469, 72]];

const Graph = () => (
  <Chart role="img" aria-label="图表编辑器" fontFamily="Noto Sans, Noto Sans CJK SC, sans-serif">
    <rect y="0" width="100%" height="50" fill={c.bg} />
    <rect x="3" y="0" width="100%" height="10" fill="#000" />
    <rect x="7" y="1" width="100%" height="8" fill="#666" />
    <path d="M7 1H5Q1 2 1 5T5 9H7Z" fill={c.blue} />
    <rect y="29" width="100%" height="21" fill="#000" />
    <rect x="7" y="30" width="100%" height="15" fill="#5f5f5f" />
    <path d="M7 30H6Q2 32 2 37T6 45H7Z" fill={c.blue} />
    <rect y="50" width="100%" height="319" fill="#333" />
    <rect x="8" y="46" width="100%" height="3" fill="#14b821" />
    {[94, 225, 357].map((x) => <rect key={x} x={x} y="46" width="7" height="3" fill="#2e2226" />)}
    <g stroke="#1c1c1c">
      {secondX.slice(1).map((x) => <path key={x} d={`M${x + 0.5} 50V369`} />)}
      {[53, ...levels.map((l) => l[0])].map((y) => <line key={y} x1="0" x2="100%" y1={y + 0.5} y2={y + 0.5} />)}
      <line x1="0" x2="100%" y1="350" y2="350" strokeWidth="2" />
    </g>
    <svg y="50" height="3" width="100%">
      <text x="10" y="2" fontSize="11" fill={c.text}>600</text>
      <text x="34" y="2" fontSize="12" fill={c.text}>像素</text>
    </svg>
    {levels.map(([y, t]) => <text key={t} x="10" y={y - 3} fontSize="11" fill="#989898">{t}</text>)}
    <text x="10" y="347" fontSize="11" fill="#989898">0</text>
    {seconds.map((s, i) => (
      <g key={s}>
        {i > 0 && <path d={`M${secondX[i] + 0.5} 24V29`} stroke="#8a8a8a" />}
        <text x={i ? secondX[i] : 0} y="21" fontSize="10" fill="#a8a8a8" textAnchor={i ? "middle" : "start"}>{s}</text>
      </g>
    ))}
    <path d="M0 347H6" stroke="#178a24" strokeWidth="2" strokeDasharray="3 3" />
    <line x1="476" x2="100%" y1="72" y2="72" stroke="#178a24" strokeWidth="2" strokeDasharray="3 3" />
    <polyline points={keys.map(([x, y]) => `${x + 0.5},${y + 0.5}`).join(" ")} fill="none" stroke="#00f52a" strokeWidth="2" />
    {keys.map(([x, y]) => <rect key={x} x={x - 3} y={y - 3} width="7" height="7" fill="#fff000" />)}
    <path d="M8.500 0V369" stroke={c.blue} />
    <path d="M3 15H14V22L8.500 28 3 22Z" fill={c.blue} />
  </Chart>
);

const TimelinePanel = () => (
  <Timeline>
    <TabBar $h={40} $pad={7}>
      <Tab $on $c={c.text} $gap={9} $px={0}>
        <Txt $s={11} $c={c.dim}>×</Txt><Chip $c={c.sand} />合成&nbsp; 1<Icon n="bars" s={10} />
      </Tab>
      <Tab $ml={36}>渲染队列</Tab>
    </TabBar>
    <Split>
      <Layers>
        <TimeHead>
          <TimeCode>0:00:00:00<small>00000 (25.00 fps)</small></TimeCode>
          <HeadSearch><SearchBox><Icon n="search" s={12} /><SmallTri /><input aria-label="搜索图层" /></SearchBox></HeadSearch>
          <HeadTools>
            <Icon n="flow" /><Space $w={17} />
            <Icon n="draft" /><Space $w={18} />
            <Icon n="shyFill" /><Space $w={11} />
            <Icon n="film" s={14} /><Space $w={12} />
            <Icon n="blur" s={14} /><Space $w={19} />
            <Icon n="graph" s={15} color={c.blue} />
          </HeadTools>
        </TimeHead>
        <ColumnHead>
          <Cell $pl={3} $gap={3} $sep><Icon n="eye" s={11} /><Icon n="speaker" s={12} /><Icon n="dot" s={12} /><Icon n="lock" s={12} /></Cell>
          <Cell $sep>
            <Space $w={13} /><Icon n="tag" s={12} /><Space $w={13} /><Txt $s={11} $c={c.dim}>#</Txt><Space $w={25} /><Txt>图层名称</Txt>
          </Cell>
          <Cell $pl={4} $gap={3} $sep>
            {["shy", "sun", "dashSlash"].map((n) => <Icon key={n} n={n} s={12} />)}
            <Fx>fx</Fx>
            {["film", "blur", "half", "cube"].map((n) => <Icon key={n} n={n} s={12} />)}
          </Cell>
          <Cell $pl={6}><Txt>模式</Txt></Cell>
          <Cell $pl={7}><Txt $s={11} $c={c.dim}>T</Txt></Cell>
          <Cell $pl={4} $sep><Txt $s={11} $c={c.dim}>TrkMat</Txt></Cell>
          <Cell $pl={4} $sep><Txt>父级</Txt></Cell>
        </ColumnHead>
        <LayerRow num={1} name="形状图层 2" on />
        <GroupRow name="内容"><AddCell /></GroupRow>
        <GroupRow name="变换" open><ResetCell /></GroupRow>
        <PropRow name="锚点"><Value>-108.3<i>,</i>-394.0</Value></PropRow>
        <PropRow name="X 位置"><Value>959.8</Value></PropRow>
        <PropRow name="Y 位置" keyed><Value>8.0</Value></PropRow>
        <PropRow name="缩放"><Icon n="link" s={13} /><Value>100.0<i>,</i>100.0<i>%</i></Value></PropRow>
        <PropRow name="旋转"><Value>0<i>x</i>+0.0<i>°</i></Value></PropRow>
        <PropRow name="不透明度"><Value>100<i>%</i></Value></PropRow>
        <LayerRow num={2} name="形状图层 1" matte />
        <GroupRow name="内容" open><AddCell /></GroupRow>
        <GroupRow name="矩形 1" pad={44} eye><Cell $pl={4}><Select label="混合模式" v="正常" w={154} h={18} /></Cell></GroupRow>
        <GroupRow name="变换"><ResetCell /></GroupRow>
        <BottomIcons>
          <Icon n="copies" s={12} color={c.blue} /><Icon n="shapes" s={12} color={c.blue} /><Icon n="brace" s={12} />
        </BottomIcons>
      </Layers>
      <GraphSide>
        <Graph />
        <Expression aria-label="表达式" readOnly value="（选择的属性没有表达式。）" />
        <GraphTools>
          <Tool $more aria-label="show properties"><Icon n="eye" /></Tool>
          <Tool $more aria-label="graph type"><Icon n="list" s={15} /></Tool>
          <Tool aria-label="transform box"><Icon n="transform" s={15} /></Tool>
          <Tool $on aria-label="snap"><Icon n="magnet" s={15} color={c.blue} /></Tool>
          <Space $w={25} />
          <Tool $on aria-label="auto zoom"><Icon n="autoZoom" s={15} color={c.blue} /></Tool>
          <Tool aria-label="fit selection"><Icon n="fitSel" s={16} /></Tool>
          <Tool aria-label="fit all"><Icon n="fitAll" s={16} /></Tool>
          <Space $w={25} />
          <Tool $on aria-label="separate dimensions"><Icon n="separate" color={c.blue} /></Tool>
          <Space $w={25} />
          <Tool $more aria-label="edit keyframe"><Icon n="diamond" s={14} /></Tool>
          <Tool aria-label="hold"><Icon n="hold" s={14} /></Tool>
          <Tool aria-label="linear"><Icon n="linear" s={14} /></Tool>
          <Tool aria-label="auto bezier"><Icon n="auto" s={14} /></Tool>
          <Space $w={25} />
          <Tool aria-label="easy ease"><Icon n="ease" /></Tool>
          <Space $w={21} />
          <Tool aria-label="easy ease in"><Icon n="easeIn" /></Tool>
        </GraphTools>
        <ZoomRow>
          <svg width="108" height="9" aria-hidden="true">
            <path d="M6 9L9 5 11 7 12 6 15 9ZM87 9L90 5 91 7 96 1 102 9Z" fill={c.icon} />
            <path d="M36 6H75" stroke="#484848" strokeWidth="3" />
            <circle cx="32" cy="8" r="4" fill={c.bg} stroke="#8a8a8a" strokeWidth="2" />
          </svg>
        </ZoomRow>
      </GraphSide>
    </Split>
  </Timeline>
);

export default function App() {
  return (
    <Shell>
      <Global />
      <MenuBar>{menus.map((m) => <MenuItem key={m}>{m}</MenuItem>)}</MenuBar>
      <TopTools />
      <Upper>
        <Project />
        <CompViewer />
        <SideDock />
      </Upper>
      <TimelinePanel />
      <SiteMark>
        <svg width="19" height="21" viewBox="0 0 19 21">
          <path d="M9.500 0L19 5V16L9.500 21 0 16V5Z" fill="#6c6c6c" />
          <text x="9" y="15" fontSize="11" fontWeight="700" fill={c.bg} textAnchor="middle" fontFamily="Noto Sans, sans-serif">UI</text>
        </svg>
        ·cn
      </SiteMark>
      <Watermark width="173" height="105" viewBox="0 0 519 315">
        <path d="M105 82H245V90H350L380 130V165L350 175 325 185V212H290V175H245V160L220 148H105Z" fill="#343434" />
        <path d="M105 140H210L245 160H225L215 150H105ZM78 62H140V72H90V80H78ZM110 88H132V104L122 112 112 104ZM238 60H262V90L330 100 365 145 380 145V165L350 175 325 185V212H296V175L285 172 300 150 308 124 280 115H255L245 90Z" fill="#232323" />
        <path d="M76 66V120M152 82V138M245 90V170M140 79H245M215 103H250" stroke="#1a1a1a" strokeWidth="3" fill="none" />
        <path d="M90 72H135V79H145V84H135V87H90ZM278 105L300 96H350Q358 98 358 143H352V112H285Z" fill="#e8e8e8" />
        <path d="M155 190H290V175H296V208H322V195L350 178 380 166V200H470L484 206V240H200V207H175L170 200 155 198Z" fill="#e8e8e8" />
        <path d="M290 175H322V215H296V178Z" fill="#232323" />
        <path d="M380 148V168" stroke="#1b1b6a" strokeWidth="3" />
        <g fill="#000" stroke="#fff" strokeWidth="6" strokeLinejoin="round" paintOrder="stroke" fontWeight="700">
          <text x="194" y="248" fontSize="36" fontFamily="Noto Sans CJK SC, sans-serif">织梦内容管理系统</text>
          <text x="190" y="284" fontSize="36" fontFamily="DejaVu Sans, sans-serif">DEDECMS.COM</text>
        </g>
      </Watermark>
    </Shell>
  );
}
